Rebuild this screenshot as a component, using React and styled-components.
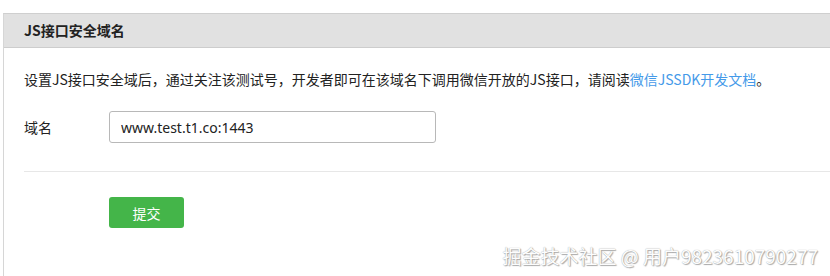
import React from "react";
import styled, { createGlobalStyle } from "styled-components";

const Global = createGlobalStyle`
  html, body { margin: 0; padding: 0; background: #fff; overflow: hidden; }
  body { font-family: "Noto Sans CJK SC", "Noto Sans", sans-serif; color: #222; }
`;

const Page = styled.div`
  position: relative;
  width: 830px;
  height: 276px;
  padding-top: 13px;
  padding-left: 3px;
  box-sizing: border-box;
`;

const Panel = styled.section`
  border-left: 1px solid #d6d6d6;
  border-top: 1px solid #cfcfcf;
  width: 840px;
  height: 100%;
`;

const Header = styled.h2`
  margin: 0;
  height: 33px;
  line-height: 33px;
  background: #e1e1e1;
  border-bottom: 1px solid #cdcdcd;
  padding-left: 20px;
  font-size: 14px;
  font-weight: 700;
  color: #222;
`;

const Body = styled.div`
  padding: 20px 0 0 20px;
`;

const Desc = styled.p`
  margin: 0;
  font-size: 14px;
  line-height: 22px;
  color: #222;
`;

const Link = styled.a`
  color: #459ae9;
  text-decoration: none;
`;

const Row = styled.div`
  display: flex;
  align-items: center;
  margin-top: 21px;
  padding-bottom: 28px;
  border-bottom: 1px solid #e7e7e7;
`;

const Label = styled.label`
  width: 85px;
  font-size: 14px;
  color: #222;
`;

const Input = styled.input`
  box-sizing: border-box;
  width: 327px;
  height: 32px;
  border: 1px solid #b8b8b8;
  border-radius: 3px;
  padding: 0 11px;
  font-family: "Noto Sans", "Noto Sans CJK SC", sans-serif;
  font-size: 14px;
  color: #222;
  outline: none;
`;

const Actions = styled.div`
  padding: 25px 0 0 85px;
`;

const Button = styled.button`
  width: 75px;
  height: 31px;
  border: none;
  border-radius: 3px;
  background: #44b549;
  color: #fff;
  font-family: "Noto Sans CJK SC", sans-serif;
  font-size: 14px;
  cursor: pointer;
`;

const Watermark = styled.div`
  position: absolute;
  right: 12px;
  bottom: 7px;
  font-family: "Noto Sans CJK SC", "Noto Sans", sans-serif;
  font-size: 19px;
  color: #fdfdfd;
  text-shadow: 0 0 1px #999, 1px 1px 1px #aaa;
  white-space: nowrap;
`;

export default function App() {
  return (
    <Page>
      <Global />
      <Panel>
        <Header>JS接口安全域名</Header>
        <Body>
          <Desc>
            设置JS接口安全域后，通过关注该测试号，开发者即可在该域名下调用微信开放的JS接口，请阅读
            <Link href="#">微信JSSDK开发文档</Link>。
          </Desc>
          <Row>
            <Label>域名</Label>
            <Input defaultValue="www.test.t1.co:1443" />
          </Row>
          <Actions>
            <Button>提交</Button>
          </Actions>
        </Body>
      </Panel>
      <Watermark>掘金技术社区 @ 用户9823610790277</Watermark>
    </Page>
  );
}
